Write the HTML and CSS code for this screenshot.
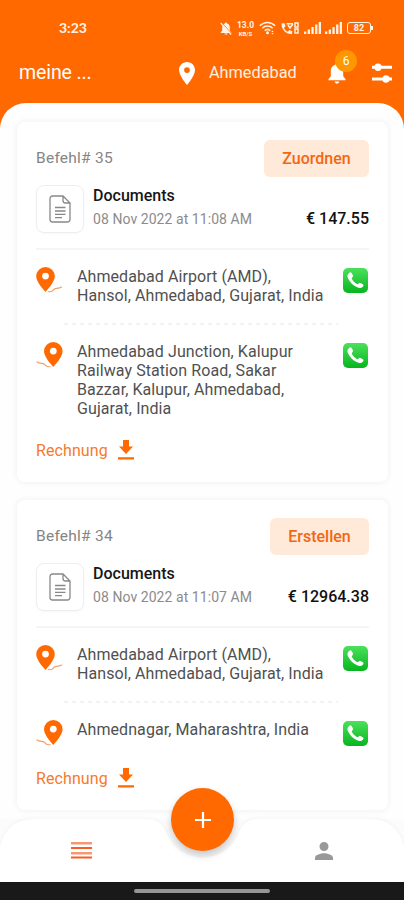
FILE: index.html
```html
<!DOCTYPE html>
<html lang="de">
<head>
<meta charset="utf-8">
<meta name="viewport" content="width=device-width, initial-scale=1">
<title>Meine Bestellungen</title>
<link rel="stylesheet" href="styles.css">
</head>
<body>
<svg class="sprite" aria-hidden="true">
  <defs>
    <linearGradient id="green" x1="0" y1="0" x2="0" y2="1"><stop offset="0" stop-color="#4be15a"/><stop offset="1" stop-color="#08b51f"/></linearGradient>
    <symbol id="pin" viewBox="5 2 14 20"><path fill-rule="evenodd" d="M12 2C8.13 2 5 5.13 5 9c0 5.250 7 13 7 13s7-7.750 7-13c0-3.870-3.130-7-7-7zm0 9.500a2.500 2.500 0 1 1 0-5 2.500 2.500 0 0 1 0 5z"/></symbol>
    <symbol id="start" viewBox="0 0 27 26"><path fill-rule="evenodd" d="M9.500 0A9.300 9.300 0 0 0 .2 9.300C.2 15.500 9.500 25 9.500 25s9.300-9.500 9.300-15.700A9.300 9.300 0 0 0 9.500 0zm0 12.500a3.400 3.400 0 1 1 0-6.800 3.400 3.400 0 0 1 0 6.800z"/><path d="M12 24.500c3 .8 4.500-.2 5.800-1.900 2-2.600 4 .2 8.200-2.800" fill="none" stroke="#f0a070" stroke-width="1.200"/></symbol>
    <symbol id="end" viewBox="0 0 27 26"><path fill-rule="evenodd" d="M17.300 0A9.300 9.300 0 0 0 8 9.300C8 15.500 17.300 25 17.300 25s9.300-9.500 9.300-15.700A9.300 9.300 0 0 0 17.300 0zm0 12.500a3.400 3.400 0 1 1 0-6.800 3.400 3.400 0 0 1 0 6.800z"/><path d="M14.500 24.500c-3 .8-4.500-.2-5.800-1.900-2-2.600-4 .2-8.200-2.800" fill="none" stroke="#f0a070" stroke-width="1.200"/></symbol>
    <symbol id="call" viewBox="0 0 25 25"><rect width="25" height="25" rx="5" fill="url(#green)"/><path fill="#fff" d="M6.100 4.900c1.500-1.300 2.200-.4 3.400 1.700.9 1.500.6 2-.2 2.800-.8.700-.7 1.200.1 2.400 1.100 1.700 2.400 2.900 4 3.900 1.100.7 1.500.6 2.200-.2.800-.8 1.400-.9 2.900 0 2.200 1.300 2.600 1.900 1.300 3.300-1.400 1.600-3.400 1.700-6.200.3-3.700-1.900-6.800-5-8.500-8.600-1.100-2.400-.8-4.200 1-5.600z"/></symbol>
    <symbol id="doc" viewBox="0 0 22 28"><g fill="none" stroke="#888" stroke-width="1.300"><path d="M3.500 1h10.500l7 7v16.500a2.500 2.500 0 0 1-2.500 2.500h-15A2.500 2.500 0 0 1 1 24.500v-21A2.500 2.500 0 0 1 3.500 1zM14 1v4.500A2.500 2.500 0 0 0 16.500 8H21M6 12.500h10.500M6 16h10.500M6 19.300h10.500M6 22.600h7"/></g></symbol>
    <symbol id="download" viewBox="0 0 16 20"><path d="M5 0h6v6.500h4L8 14 1 6.500h4zM0 17.200h16v2.200H0z"/></symbol>
    <symbol id="signal" viewBox="0 0 17 13"><path d="M0 9.500h2.300V12H0zM3.700 7.500H6V12H3.700zM7.400 5h2.300v7H7.400zM11.100 2.500h2.300V12h-2.300zM14.700 0H17v12h-2.300z"/></symbol>
  </defs>
</svg>
<div class="screen">
  <header class="top">
    <div class="status">
      <span class="clock">3:23</span>
      <div class="status-icons">
        <svg class="mute" viewBox="0 0 12 13"><path d="M6 .5c.7 0 1 .4 1 1 2 .6 2.800 2.200 2.800 4v3l1.500 2v.5H.7v-.5l1.500-2v-3c0-1.800.8-3.400 2.800-4 0-.6.3-1 1-1zM4.500 11.500h3c0 1.600-3 1.600-3 0z"/><path d="M1.500 .5l10 11" stroke="#ff6900" stroke-width="1"/><path d="M.7 1l10.500 11.500" stroke="#fff3e8" stroke-width="1.200"/></svg>
        <span class="speed"><b>13.0</b><small>KB/S</small></span>
        <svg class="wifi" viewBox="0 0 17 14"><path d="M.8 4.800c4.300-4.400 11-4.400 15.300 0M3.200 7.300c3-3 7.500-3 10.500 0M5.700 9.700c1.600-1.500 4-1.500 5.600 0" fill="none" stroke="currentColor" stroke-width="1.600"/><circle cx="8.500" cy="11.700" r="1.500"/><path d="M13.500 9.500l1.200 1.500h-2.400zM13.500 13.500l-1.200-1.500h2.400z"/></svg>
        <svg class="volte" viewBox="0 0 18 13"><path d="M.5 1.500l3-.3 1 3.300-1.600 1.200c.8 2 2 3.100 3.900 4l1.500-1.600 3 1.200-.3 2.700C5.500 12.700.2 7.500.5 1.500z"/><path d="M5.500 1.700H12M7 3l2 3 3-4M14 1h3v4h-3zM14 7h3v4h-3z" fill="none" stroke="currentColor" stroke-width="1.500"/></svg>
        <svg class="signal"><use href="#signal"/></svg>
        <svg class="signal second"><use href="#signal"/></svg>
        <span class="battery">82</span>
      </div>
    </div>
    <div class="appbar">
      <h1>meine ...</h1>
      <svg class="place-pin"><use href="#pin"/></svg>
      <span class="place">Ahmedabad</span>
      <div class="bell"><svg viewBox="0 0 18 22"><path d="M9 0c1.200 0 1.800.8 1.800 1.900 3.500.9 4.700 3.600 4.700 6.800v5.200l2.500 3v1.300H0v-1.300l2.500-3V8.700c0-3.200 1.200-5.900 4.700-6.800C7.200.8 7.800 0 9 0zM6.700 19.300h4.600c0 3-4.600 3-4.600 0z"/></svg><span class="badge">6</span></div>
      <svg class="filter" viewBox="0 0 20 20"><path d="M0 2.700h20v3H0zM0 14.500h20v3H0z"/><circle cx="6" cy="4.200" r="3.700"/><circle cx="14" cy="16" r="3.700"/></svg>
    </div>
  </header>
  <main class="sheet">
    <article class="card">
      <div class="card-head"><span class="order">Befehl# 35</span><button class="assign">Zuordnen</button></div>
      <div class="parcel"><div class="thumb"><svg><use href="#doc"/></svg></div><div class="info"><h2>Documents</h2><div class="meta"><time>08 Nov 2022 at 11:08 AM</time><strong>€ 147.55</strong></div></div></div>
      <div class="stop"><svg class="marker"><use href="#start"/></svg><p>Ahmedabad Airport (AMD),<br>Hansol, Ahmedabad, Gujarat, India</p><svg class="call"><use href="#call"/></svg></div>
      <svg class="dashes"><line x1="0" y1="1" x2="274" y2="1"/></svg>
      <div class="stop last"><svg class="marker"><use href="#end"/></svg><p>Ahmedabad Junction, Kalupur<br>Railway Station Road, Sakar<br>Bazzar, Kalupur, Ahmedabad,<br>Gujarat, India</p><svg class="call"><use href="#call"/></svg></div>
      <div class="invoice"><span>Rechnung</span><svg><use href="#download"/></svg></div>
    </article>
    <article class="card">
      <div class="card-head"><span class="order">Befehl# 34</span><button class="create">Erstellen</button></div>
      <div class="parcel"><div class="thumb"><svg><use href="#doc"/></svg></div><div class="info"><h2>Documents</h2><div class="meta"><time>08 Nov 2022 at 11:07 AM</time><strong>€ 12964.38</strong></div></div></div>
      <div class="stop"><svg class="marker"><use href="#start"/></svg><p>Ahmedabad Airport (AMD),<br>Hansol, Ahmedabad, Gujarat, India</p><svg class="call"><use href="#call"/></svg></div>
      <svg class="dashes"><line x1="0" y1="1" x2="274" y2="1"/></svg>
      <div class="stop last"><svg class="marker"><use href="#end"/></svg><p>Ahmednagar, Maharashtra, India</p><svg class="call"><use href="#call"/></svg></div>
      <div class="invoice"><span>Rechnung</span><svg><use href="#download"/></svg></div>
    </article>
  </main>
  <nav class="tabs">
    <svg class="tabs-shape" viewBox="0 0 404 63"><path d="M0 63V28Q7 0 34 0h113c9 0 15 4 19 13 14 34 59 34 73 0 4-9 10-13 19-13h112q27 0 34 28v35z"/></svg>
    <svg class="list-icon" viewBox="0 0 21 17"><path d="M0 5h21v2H0zM0 14.500h21v2H0z"/><path d="M0 0h21v2.500H0zM0 10h21v2.500H0z" opacity=".65"/></svg>
    <button class="fab" aria-label="Neu"><svg viewBox="0 0 18 18"><path d="M9 1v16M1 9h16" stroke="#fff" stroke-width="2.200"/></svg></button>
    <svg class="person" viewBox="4 4 16 16"><path d="M12 12a4 4 0 1 0 0-8 4 4 0 0 0 0 8zm0 2c-2.670 0-8 1.340-8 4v2h16v-2c0-2.660-5.330-4-8-4z"/></svg>
  </nav>
  <footer class="gesture"><span></span></footer>
</div>
</body>
</html>
```
FILE: styles.css
```css
* { box-sizing: border-box; }
body { margin: 0; font-family: Roboto, sans-serif; background: #ff6900; color: #505050; }
h1, h2, p { margin: 0; font-weight: 400; }
button { border: 0; padding: 0; font: inherit; }
svg { display: block; flex: none; fill: currentColor; }
.sprite { position: absolute; width: 0; height: 0; }
.screen { width: 404px; height: 900px; display: flex; flex-direction: column; overflow: hidden; }

.top { height: 103px; flex: none; color: #fff3e8; }
.status { height: 56px; padding: 0 31px 0 59px; display: flex; align-items: center; justify-content: space-between; }
.clock { font: 700 14px/16px Lato, sans-serif; }
.status-icons { display: flex; align-items: center; }
.mute { width: 12px; height: 13px; }
.speed { margin-left: 5px; width: 17px; display: flex; flex-direction: column; align-items: center; font-size: 8.500px; line-height: 10px; }
.speed small { font-size: 6px; line-height: 7px; font-weight: 700; }
.wifi { width: 17px; height: 14px; margin-left: 5px; }
.volte { width: 18px; height: 13px; margin-left: 5px; }
.signal { width: 17px; height: 13px; margin-left: 5px; }
.second { margin-left: 4px; }
.battery { position: relative; width: 24px; height: 12px; margin: 0 2px 0 5px; border: 1px solid; border-radius: 3px; font: 700 9px/10px Roboto, sans-serif; text-align: center; }
.battery::after { content: ""; position: absolute; right: -3px; top: 3px; width: 2px; height: 4px; background: currentColor; }
.appbar { height: 34px; padding: 0 12px 0 19px; display: flex; align-items: center; color: #fff; }
h1 { width: 160px; font-size: 19.500px; line-height: 24px; letter-spacing: -.1px; }
.place-pin { width: 16px; height: 23px; }
.place { width: 119px; margin-left: 14px; font-size: 16.300px; line-height: 20px; color: #fff0e2; }
.bell { position: relative; width: 18px; height: 22px; margin-top: 2px; }
.bell svg { width: 18px; height: 21px; }
.badge { position: absolute; left: 7px; top: -13px; width: 22px; height: 22px; border-radius: 50%; background: #ff9800; text-align: center; font-size: 12px; line-height: 22px; }
.filter { width: 20px; height: 20px; margin-left: 26px; }

.sheet { height: 716px; flex: none; padding: 19px 16px 0 17px; border-radius: 26px 26px 0 0; background: #fefefe; overflow: hidden; display: flex; flex-direction: column; gap: 18px; }
.card { flex: none; padding: 18px 19px 22px; border-radius: 8px; background: #fff; box-shadow: 0 0 5px 2px rgba(0, 0, 0, .04); }
.card-head { height: 37px; display: flex; justify-content: space-between; align-items: flex-start; }
.order { margin-top: 8px; font-size: 15.500px; line-height: 20px; color: #858585; letter-spacing: .25px; }
.assign, .create { height: 37px; border-radius: 6px; background: #ffe9d9; color: #f36612; font-size: 16px; font-weight: 500; }
.assign { width: 105px; }
.create { width: 99px; }
.parcel { height: 73px; padding-top: 8px; border-bottom: 2px solid #f5f5f5; display: flex; gap: 9px; }
.thumb { width: 48px; height: 48px; flex: none; border: 1px solid #eee; border-radius: 8px; display: grid; place-items: center; box-shadow: 0 1px 2px rgba(0, 0, 0, .03); }
.thumb svg { width: 22px; height: 28px; }
.info { flex: 1; }
.info h2 { font-size: 16px; line-height: 21px; font-weight: 500; color: #161616; }
.meta { display: flex; align-items: center; justify-content: space-between; margin-top: 2px; line-height: 22px; white-space: nowrap; }
time { font-size: 14px; color: #8b8b8b; letter-spacing: .06px; }
strong { font-size: 16px; font-weight: 500; color: #111; }
.stop { display: flex; align-items: flex-start; height: 73px; padding-top: 17px; font-size: 16px; line-height: 19px; letter-spacing: .08px; }
.stop.last { height: auto; padding-top: 17px; }
.stop p { flex: 1; margin-left: 14px; white-space: nowrap; }
.marker { width: 27px; height: 26px; color: #ff6900; }
.call { width: 25px; height: 25px; margin: 1px 1px 0 0; }
.dashes { width: 274px; height: 2px; margin-left: 28px; stroke: #f0f0f0; stroke-width: 1.500; stroke-dasharray: 4 4; }
.invoice { display: flex; align-items: center; gap: 10px; height: 20px; margin-top: 22px; color: #f47a30; font-size: 16px; letter-spacing: .1px; }
.invoice span { width: 72px; }
.invoice svg { width: 16px; height: 20px; color: #ff6900; }

.tabs { position: relative; height: 63px; flex: none; background: #fcfcfc; display: flex; align-items: center; justify-content: space-between; padding: 0 71px 0 71px; }
.tabs-shape { position: absolute; inset: 0; width: 404px; height: 63px; fill: #fff; filter: drop-shadow(0 -1px 2px rgba(0, 0, 0, .04)); }
.list-icon { position: relative; width: 21px; height: 17px; color: #f2602a; }
.person { position: relative; width: 18px; height: 18px; color: #999; }
.fab { position: absolute; left: 171px; top: -31px; width: 63px; height: 63px; border-radius: 50%; background: #ff6900; display: grid; place-items: center; box-shadow: 0 4px 7px rgba(0, 0, 0, .22); }
.fab svg { width: 18px; height: 18px; }
.gesture { height: 18px; flex: none; background: #191919; display: grid; place-items: center; }
.gesture span { width: 136px; height: 4px; border-radius: 2px; background: #969696; }
```
